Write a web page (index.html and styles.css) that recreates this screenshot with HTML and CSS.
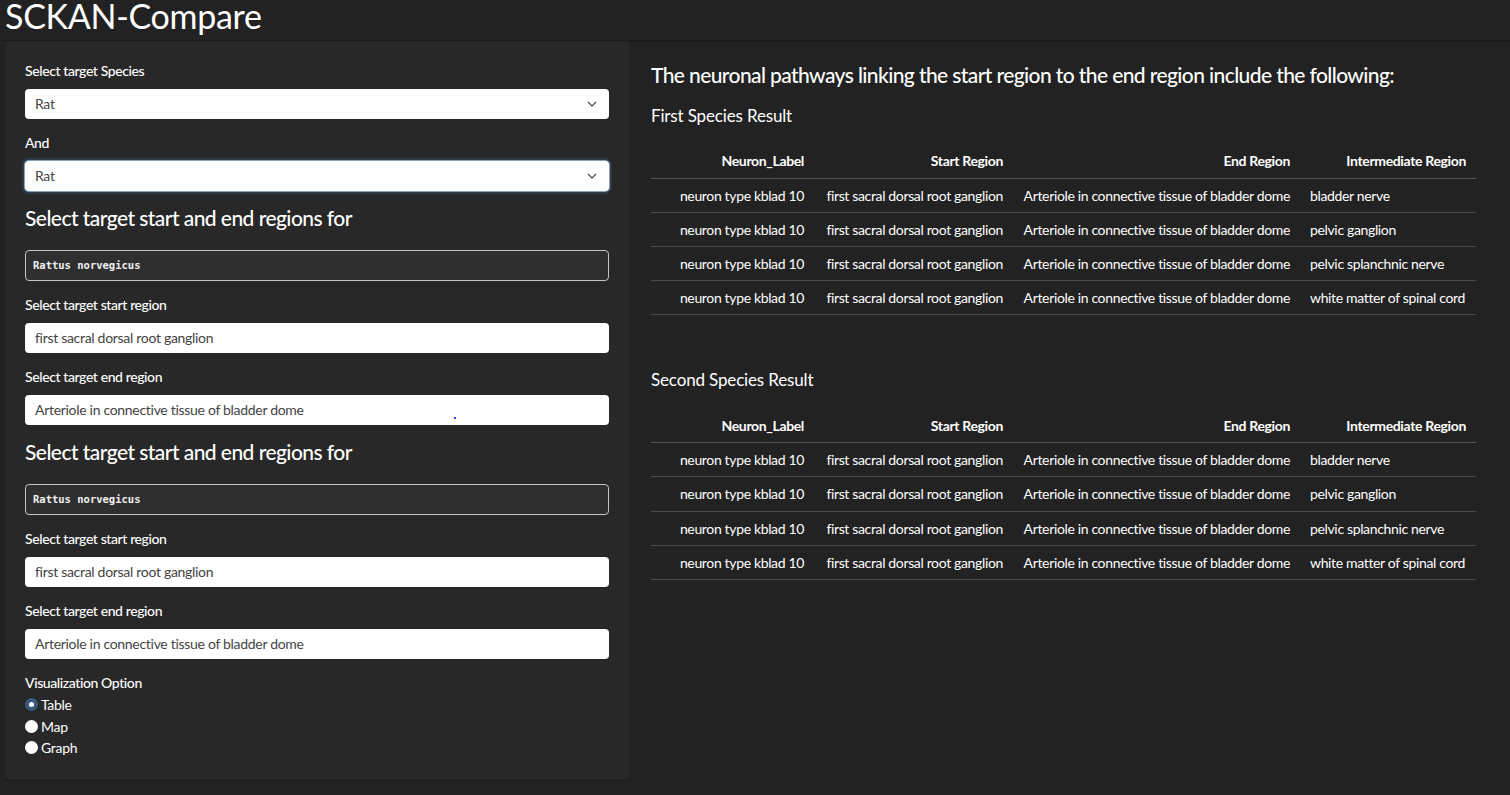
FILE: index.html
```html
<!DOCTYPE html>
<html>
<head>
<meta charset="utf-8">
<title>SCKAN-Compare</title>
<link rel="stylesheet" href="styles.css">
</head>
<body>
<div class="page">
  <h1 class="title">SCKAN-Compare</h1>
  <div class="layout">
    <aside class="sidebar">
      <div class="group">
        <label class="label">Select target Species</label>
        <div class="control select"><span>Rat</span><svg class="chev" width="10" height="6" viewBox="0 0 10 6"><polyline points="1,1 5,5 9,1" fill="none" stroke="#555" stroke-width="1.3"/></svg></div>
      </div>
      <div class="group">
        <label class="label">And</label>
        <div class="control select focused"><span>Rat</span><svg class="chev" width="10" height="6" viewBox="0 0 10 6"><polyline points="1,1 5,5 9,1" fill="none" stroke="#555" stroke-width="1.3"/></svg></div>
      </div>
      <h3 class="section">Select target start and end regions for</h3>
      <div class="species-box">Rattus norvegicus</div>
      <div class="group">
        <label class="label">Select target start region</label>
        <div class="control">first sacral dorsal root ganglion</div>
      </div>
      <div class="group">
        <label class="label">Select target end region</label>
        <div class="control">Arteriole in connective tissue of bladder dome<span class="stray"></span></div>
      </div>
      <h3 class="section">Select target start and end regions for</h3>
      <div class="species-box">Rattus norvegicus</div>
      <div class="group">
        <label class="label">Select target start region</label>
        <div class="control">first sacral dorsal root ganglion</div>
      </div>
      <div class="group">
        <label class="label">Select target end region</label>
        <div class="control">Arteriole in connective tissue of bladder dome</div>
      </div>
      <div class="group radios">
        <label class="label">Visualization Option</label>
        <div class="radio"><span class="dot checked"></span>Table</div>
        <div class="radio"><span class="dot"></span>Map</div>
        <div class="radio"><span class="dot"></span>Graph</div>
      </div>
    </aside>
    <main class="main">
      <h3 class="main-heading">The neuronal pathways linking the start region to the end region include the following:</h3>
      <h4 class="result-title">First Species Result</h4>
      <table class="result">
        <colgroup><col class="c1"><col class="c2"><col class="c3"><col class="c4"></colgroup>
        <thead><tr><th>Neuron_Label</th><th>Start Region</th><th>End Region</th><th>Intermediate Region</th></tr></thead>
        <tbody>
          <tr><td>neuron type kblad 10</td><td>first sacral dorsal root ganglion</td><td>Arteriole in connective tissue of bladder dome</td><td class="left">bladder nerve</td></tr>
          <tr><td>neuron type kblad 10</td><td>first sacral dorsal root ganglion</td><td>Arteriole in connective tissue of bladder dome</td><td class="left">pelvic ganglion</td></tr>
          <tr><td>neuron type kblad 10</td><td>first sacral dorsal root ganglion</td><td>Arteriole in connective tissue of bladder dome</td><td class="left">pelvic splanchnic nerve</td></tr>
          <tr><td>neuron type kblad 10</td><td>first sacral dorsal root ganglion</td><td>Arteriole in connective tissue of bladder dome</td><td class="left">white matter of spinal cord</td></tr>
        </tbody>
      </table>
      <h4 class="result-title second">Second Species Result</h4>
      <table class="result second-table">
        <colgroup><col class="c1"><col class="c2"><col class="c3"><col class="c4"></colgroup>
        <thead><tr><th>Neuron_Label</th><th>Start Region</th><th>End Region</th><th>Intermediate Region</th></tr></thead>
        <tbody>
          <tr><td>neuron type kblad 10</td><td>first sacral dorsal root ganglion</td><td>Arteriole in connective tissue of bladder dome</td><td class="left">bladder nerve</td></tr>
          <tr><td>neuron type kblad 10</td><td>first sacral dorsal root ganglion</td><td>Arteriole in connective tissue of bladder dome</td><td class="left">pelvic ganglion</td></tr>
          <tr><td>neuron type kblad 10</td><td>first sacral dorsal root ganglion</td><td>Arteriole in connective tissue of bladder dome</td><td class="left">pelvic splanchnic nerve</td></tr>
          <tr><td>neuron type kblad 10</td><td>first sacral dorsal root ganglion</td><td>Arteriole in connective tissue of bladder dome</td><td class="left">white matter of spinal cord</td></tr>
        </tbody>
      </table>
    </main>
  </div>
</div>
</body>
</html>
```
FILE: styles.css
```css
* { box-sizing: border-box; }
html, body { margin: 0; padding: 0; }
body {
  background: #222222;
  color: #ffffff;
  font-family: Lato, "Noto Sans", sans-serif;
  font-size: 14px;
  width: 1510px;
  height: 795px;
  overflow: hidden;
}
.page { padding: 0 0 0 5px; }
.title {
  margin: 0 0 0 -5px;
  padding-left: 5px;
  font-size: 34px;
  font-weight: 400;
  line-height: 31px;
  height: 41px;
  letter-spacing: -0.3px;
  border-bottom: 1px solid #1c1c1c;
}
.layout { display: flex; align-items: flex-start; }
.sidebar {
  width: 625px;
  background: #282828;
  border-radius: 4px;
  padding: 20px 20px 20px 19px;
  border: 1px solid #252525;
  box-shadow: 0 1px 1px rgba(0,0,0,0.25);
}
.group { margin-bottom: 15px; }
.label {
  display: block;
  line-height: 18px;
  margin-bottom: 9px;
  font-size: 14px;
  font-weight: 500;
  letter-spacing: -0.4px;
}
.control {
  position: relative;
  height: 30px;
  background: #ffffff;
  border-radius: 4px;
  color: #444;
  padding: 0 10px;
  line-height: 30px;
  font-size: 14px;
  letter-spacing: -0.3px;
}
.select .chev { position: absolute; right: 12px; top: 12px; }
.focused {
  box-shadow: 0 0 0 1px #8aa0b8, 0 0 0 3px #2e3a46;
}
.stray {
  position: absolute;
  left: 429px;
  top: 22px;
  width: 2px;
  height: 2px;
  background: #3a3aff;
}
.section {
  margin: 0 0 20px 0;
  font-size: 21px;
  font-weight: 500;
  line-height: 24px;
  letter-spacing: -0.55px;
}
.species-box {
  height: 31px;
  background: #2f2f2f;
  border: 1px solid #c4c4c4;
  border-radius: 4px;
  padding: 0 7px;
  line-height: 29px;
  font-family: "DejaVu Sans Mono", "Liberation Mono", monospace;
  font-weight: 700;
  font-size: 10.5px;
  color: #f0f0f0;
  margin-bottom: 15px;
}
.radios { margin-bottom: 0; }
.radios .label { margin-bottom: 2px; }
.radio {
  display: flex;
  align-items: center;
  height: 21.5px;
  line-height: 21px;
  font-size: 14px;
  letter-spacing: -0.3px;
}
.dot {
  width: 13px;
  height: 13px;
  border-radius: 50%;
  background: #ffffff;
  margin-right: 3px;
}
.dot.checked {
  background: #ffffff;
  border: 4px solid #375a7f;
}
.main {
  flex: 1;
  padding: 22px 0 0 21px;
}
.main-heading {
  margin: 0 0 19px 0;
  font-size: 21px;
  font-weight: 500;
  line-height: 24px;
  letter-spacing: -0.6px;
}
.result-title {
  margin: 0 0 17px 0;
  font-size: 17px;
  font-weight: 400;
  line-height: 20px;
  letter-spacing: -0.15px;
}
.result-title.second { margin-top: 55px; margin-bottom: 19px; }
.result {
  border-collapse: collapse;
  table-layout: fixed;
  width: 825px;
  font-size: 14px;
  letter-spacing: -0.35px;
}
.result .c1 { width: 163px; }
.result .c2 { width: 199px; }
.result .c3 { width: 287px; }
.result .c4 { width: 176px; }
.result th {
  text-align: right;
  font-weight: 700;
  padding: 0 10px;
  height: 35px;
  border-bottom: 1px solid #555555;
  white-space: nowrap;
}
.result td {
  text-align: right;
  padding: 0 10px;
  height: 34px;
  border-bottom: 1px solid #4a4a4a;
  white-space: nowrap;
}
.second-table th { height: 34px; }
.second-table td { height: 34.33px; }
.result td.left { text-align: left; }
```
